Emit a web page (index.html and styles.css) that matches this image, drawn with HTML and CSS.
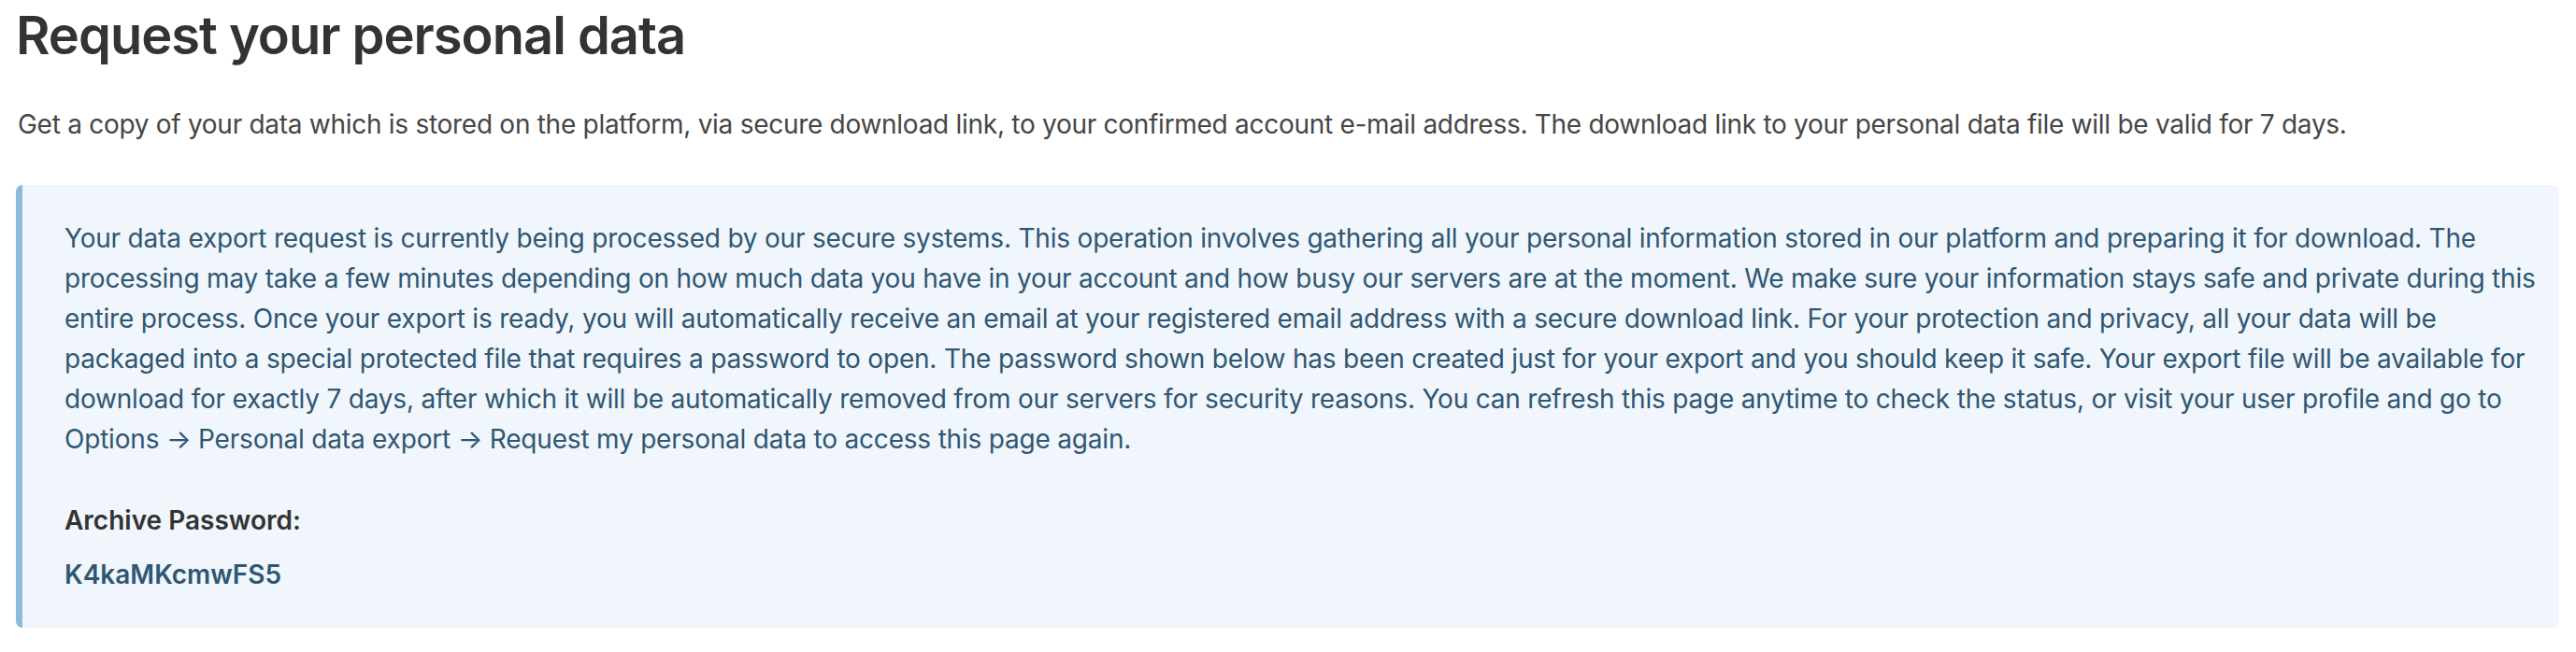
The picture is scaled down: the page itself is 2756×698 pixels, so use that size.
FILE: index.html
```html
<!DOCTYPE html>
<html lang="en">
<head>
<meta charset="utf-8">
<title>Request your personal data</title>
<link rel="stylesheet" href="styles.css">
</head>
<body>
<main class="page">
  <h1 class="title">Request your personal data</h1>
  <p class="intro">Get a copy of your data which is stored on the platform, via secure download link, to your confirmed account e-mail address. The download link to your personal data file will be valid for 7 days.</p>
  <section class="notice">
    <p class="notice-text">Your data export request is currently being processed by our secure systems. This operation involves gathering all your personal information stored in our platform and preparing it for download. The processing may take a few minutes depending on how much data you have in your account and how busy our servers are at the moment. We make sure your information stays safe and private during this entire process. Once your export is ready, you will automatically receive an email at your registered email address with a secure download link. For your protection and privacy, all your data will be packaged into a special protected file that requires a password to open. The password shown below has been created just for your export and you should keep it safe. Your export file will be available for download for exactly 7 days, after which it will be automatically removed from our servers for security reasons. You can refresh this page anytime to check the status, or visit your user profile and go to Options → Personal data export → Request my personal data to access this page again.</p>
    <div class="pw-label">Archive Password:</div>
    <div class="pw-value">K4kaMKcmwFS5</div>
  </section>
</main>
</body>
</html>
```

FILE: styles.css
```css
html, body {
  margin: 0;
  padding: 0;
  background: #ffffff;
}

body {
  font-family: "Inter", "Noto Sans", "Liberation Sans", sans-serif;
  font-size: 28px;
  line-height: 43px;
  color: #444444;
}

.page {
  padding: 5px 18px 0 17px;
}

.title {
  margin: 0;
  font-size: 56px;
  line-height: 67px;
  font-weight: 600;
  color: #333333;
  letter-spacing: -1px;
}

.intro {
  margin: 40px 0 0 2px;
  color: #464646;
  letter-spacing: -0.28px;
}

.notice {
  margin-top: 43px;
  background: #f0f6fb;
  border-left: 7px solid #8cbcd9;
  border-radius: 7px;
  padding: 36px 16px 35px 45px;
  color: #2f5674;
}

.notice-text {
  margin: 0 0 44px 0;
  letter-spacing: -0.2px;
}

.pw-label {
  font-weight: 600;
  color: #333333;
}

.pw-value {
  margin-top: 15px;
  font-weight: 600;
  color: #2f5674;
}
```
